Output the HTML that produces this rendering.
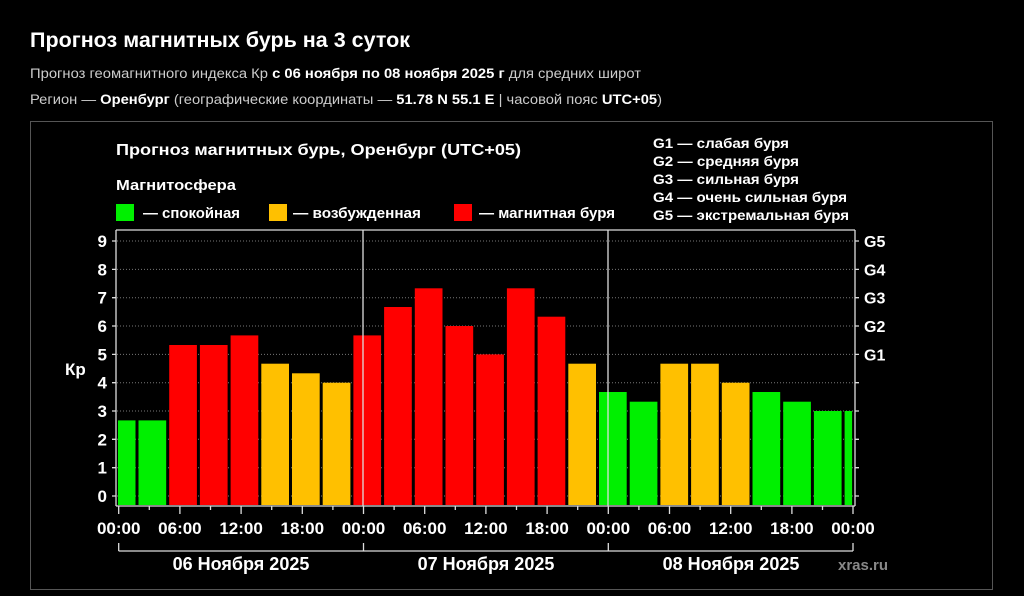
<!DOCTYPE html>
<html><head><meta charset="utf-8"><style>
html,body{margin:0;padding:0;background:#000;width:1024px;height:596px;overflow:hidden}
svg{display:block;font-family:"Liberation Sans",sans-serif}
</style></head><body>
<svg width="1024" height="596" viewBox="0 0 1024 596" xmlns="http://www.w3.org/2000/svg">
<rect width="1024" height="596" fill="#000"/>
<text x="30" y="47" fill="#fff" font-size="21" font-weight="bold" textLength="380" lengthAdjust="spacingAndGlyphs">Прогноз магнитных бурь на 3 суток</text>
<text x="30" y="78" fill="#ccc" font-size="13.5" textLength="611" lengthAdjust="spacingAndGlyphs">Прогноз геомагнитного индекса Кр <tspan fill="#fff" font-weight="bold">с 06 ноября по 08 ноября 2025 г</tspan> для средних широт</text>
<text x="30" y="104" fill="#ccc" font-size="13.5" textLength="632" lengthAdjust="spacingAndGlyphs">Регион — <tspan fill="#fff" font-weight="bold">Оренбург</tspan> (географические координаты — <tspan fill="#fff" font-weight="bold">51.78 N 55.1 E</tspan> | часовой пояс <tspan fill="#fff" font-weight="bold">UTC+05</tspan>)</text>
<rect x="30.5" y="121.5" width="962" height="468" fill="none" stroke="#555" stroke-width="1"/>
<g fill="#fff" font-weight="bold">
<text x="116" y="155" font-size="16" textLength="405" lengthAdjust="spacingAndGlyphs">Прогноз магнитных бурь, Оренбург (UTC+05)</text>
<text x="116" y="190" font-size="14.5" textLength="120" lengthAdjust="spacingAndGlyphs">Магнитосфера</text>
<g font-size="14" font-weight="bold">
<text x="653" y="148" textLength="136" lengthAdjust="spacingAndGlyphs">G1 — слабая буря</text>
<text x="653" y="166" textLength="146" lengthAdjust="spacingAndGlyphs">G2 — средняя буря</text>
<text x="653" y="184" textLength="146" lengthAdjust="spacingAndGlyphs">G3 — сильная буря</text>
<text x="653" y="202" textLength="194" lengthAdjust="spacingAndGlyphs">G4 — очень сильная буря</text>
<text x="653" y="220" textLength="196" lengthAdjust="spacingAndGlyphs">G5 — экстремальная буря</text>
</g>
<g font-size="14.5">
<text x="143" y="218" textLength="97" lengthAdjust="spacingAndGlyphs">— спокойная</text>
<text x="293" y="218" textLength="128" lengthAdjust="spacingAndGlyphs">— возбужденная</text>
<text x="479" y="218" textLength="136" lengthAdjust="spacingAndGlyphs">— магнитная буря</text>
</g>
</g>
<rect x="116" y="204" width="18" height="17" fill="#00f000"/>
<rect x="269" y="204" width="18" height="17" fill="#ffc000"/>
<rect x="454" y="204" width="18" height="17" fill="#ff0000"/>
<g stroke="#777" stroke-width="1" stroke-dasharray="1,2">
<line x1="117" x2="853" y1="496" y2="496"/><line x1="117" x2="853" y1="467.7" y2="467.7"/><line x1="117" x2="853" y1="439.3" y2="439.3"/><line x1="117" x2="853" y1="411" y2="411"/><line x1="117" x2="853" y1="382.7" y2="382.7"/><line x1="117" x2="853" y1="354.4" y2="354.4"/><line x1="117" x2="853" y1="326" y2="326"/><line x1="117" x2="853" y1="297.7" y2="297.7"/><line x1="117" x2="853" y1="269.4" y2="269.4"/><line x1="117" x2="853" y1="241" y2="241"/>
</g>
<g>
<rect x="118" y="420.4" width="17.5" height="84.6" fill="#00f000"/>
<rect x="138.5" y="420.4" width="27.7" height="84.6" fill="#00f000"/>
<rect x="169.2" y="345" width="27.7" height="160" fill="#ff0000"/>
<rect x="199.9" y="345" width="27.7" height="160" fill="#ff0000"/>
<rect x="230.6" y="335.4" width="27.7" height="169.6" fill="#ff0000"/>
<rect x="261.3" y="363.7" width="27.7" height="141.3" fill="#ffc000"/>
<rect x="292" y="373.3" width="27.7" height="131.7" fill="#ffc000"/>
<rect x="322.7" y="382.7" width="27.7" height="122.3" fill="#ffc000"/>
<rect x="353.4" y="335.4" width="27.7" height="169.6" fill="#ff0000"/>
<rect x="384.1" y="307" width="27.7" height="198" fill="#ff0000"/>
<rect x="414.8" y="288.3" width="27.7" height="216.7" fill="#ff0000"/>
<rect x="445.5" y="326" width="27.7" height="179" fill="#ff0000"/>
<rect x="476.2" y="354.4" width="27.7" height="150.6" fill="#ff0000"/>
<rect x="506.9" y="288.3" width="27.7" height="216.7" fill="#ff0000"/>
<rect x="537.6" y="316.7" width="27.7" height="188.3" fill="#ff0000"/>
<rect x="568.3" y="363.7" width="27.7" height="141.3" fill="#ffc000"/>
<rect x="599" y="392" width="27.7" height="113" fill="#00f000"/>
<rect x="629.7" y="401.7" width="27.7" height="103.3" fill="#00f000"/>
<rect x="660.4" y="363.7" width="27.7" height="141.3" fill="#ffc000"/>
<rect x="691.1" y="363.7" width="27.7" height="141.3" fill="#ffc000"/>
<rect x="721.8" y="382.7" width="27.7" height="122.3" fill="#ffc000"/>
<rect x="752.5" y="392" width="27.7" height="113" fill="#00f000"/>
<rect x="783.2" y="401.7" width="27.7" height="103.3" fill="#00f000"/>
<rect x="813.9" y="411" width="27.7" height="94" fill="#00f000"/>
<rect x="844.6" y="411" width="7.5" height="94" fill="#00f000"/>
</g>
<g stroke="#ddd" stroke-width="1.3" fill="none">
<line x1="116" y1="230" x2="855" y2="230"/>
<line x1="116" y1="230" x2="116" y2="506"/>
<line x1="855" y1="230" x2="855" y2="506"/>
<line x1="116" y1="506" x2="855" y2="506"/>
<line x1="363" y1="230" x2="363" y2="506"/>
<line x1="608" y1="230" x2="608" y2="506"/>
<path d="M112 496H116M112 467.7H116M112 439.3H116M112 411H116M112 382.7H116M112 354.4H116M112 326H116M112 297.7H116M112 269.4H116M112 241H116"/>
<path d="M855 496H859M855 467.7H859M855 439.3H859M855 411H859M855 382.7H859M855 354.4H859M855 326H859M855 297.7H859M855 269.4H859M855 241H859"/>
<path d="M118.7 506v8M149.3 506v4M179.9 506v8M210.5 506v4M241.1 506v8M271.7 506v4M302.3 506v8M332.9 506v4M363.5 506v8M394.1 506v4M424.7 506v8M455.3 506v4M485.9 506v8M516.5 506v4M547.1 506v8M577.7 506v4M608.3 506v8M638.9 506v4M669.5 506v8M700.1 506v4M730.7 506v8M761.3 506v4M791.9 506v8M822.5 506v4M853 506v8"/>
<path d="M118.7 543v8M363.5 543v8M608.3 543v8M853 543v8M118.7 551H853"/>
</g>
<g fill="#fff" font-weight="bold" font-size="17" text-anchor="end">
<text x="107" y="502">0</text><text x="107" y="473.7">1</text><text x="107" y="445.3">2</text><text x="107" y="417">3</text><text x="107" y="388.7">4</text><text x="107" y="360.4">5</text><text x="107" y="332">6</text><text x="107" y="303.7">7</text><text x="107" y="275.4">8</text><text x="107" y="247">9</text>
</g>
<text x="65" y="375" fill="#fff" font-weight="bold" font-size="17">Кр</text>
<g fill="#fff" font-weight="bold" font-size="16">
<text x="864" y="247">G5</text><text x="864" y="275.4">G4</text><text x="864" y="303.7">G3</text><text x="864" y="332">G2</text><text x="864" y="360.4">G1</text>
</g>
<g fill="#fff" font-weight="bold" font-size="17" text-anchor="middle">
<text x="118.7" y="534">00:00</text><text x="179.9" y="534">06:00</text><text x="241.1" y="534">12:00</text><text x="302.3" y="534">18:00</text><text x="363.5" y="534">00:00</text><text x="424.7" y="534">06:00</text><text x="485.9" y="534">12:00</text><text x="547.1" y="534">18:00</text><text x="608.3" y="534">00:00</text><text x="669.5" y="534">06:00</text><text x="730.7" y="534">12:00</text><text x="791.9" y="534">18:00</text><text x="853" y="534">00:00</text>
<text x="241" y="570" font-size="18">06 Ноября 2025</text>
<text x="486" y="570" font-size="18">07 Ноября 2025</text>
<text x="731" y="570" font-size="18">08 Ноября 2025</text>
</g>
<text x="838" y="570" fill="#888" font-weight="bold" font-size="15">xras.ru</text>
</svg>
</body></html>
